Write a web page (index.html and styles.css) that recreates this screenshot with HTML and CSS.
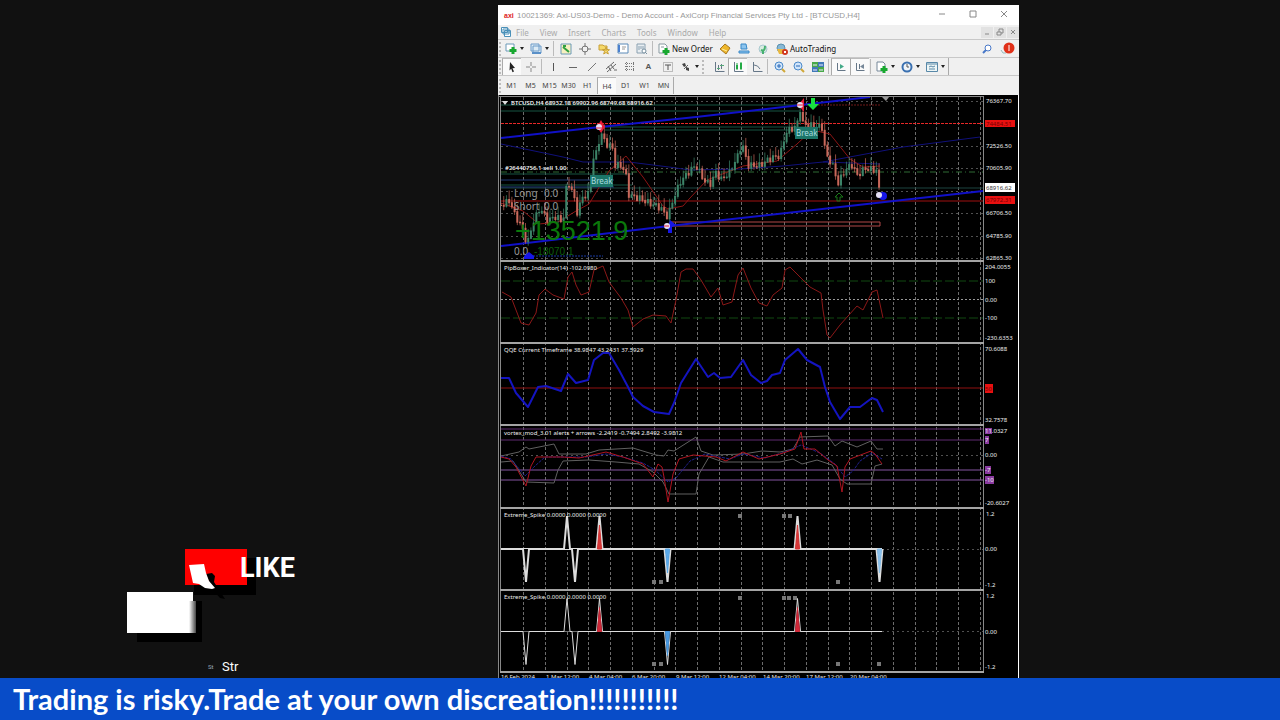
FILE: index.html
```
<!DOCTYPE html>
<html lang="en">

<head>
    <meta charset="UTF-8">
    <meta name="viewport" content="width=device-width, initial-scale=1.0">
    <title>Live Trading Stream</title>
    <link rel="stylesheet" href="styles.css">
</head>

<body>
    <main class="stage">
        <aside class="promo">
            <svg class="promo-art" viewBox="120 540 190 138" width="190" height="138">
                <defs>
                    <linearGradient id="edge">
                        <stop offset="0" stop-color="#fff" />
                        <stop offset="1" stop-color="#444" />
                    </linearGradient>
                </defs>
                <path fill="#000" d="M194 558h62v37h-62zM137 601h65v41h-65z" />
                <path fill="#f00" d="M185 549h62v36h-62z" />
                <path fill="#000" d="M206 574l6-1 3 3-1 6 11 17-5-1-8-9z" />
                <path fill="#fff" d="M189 565l15-1 2 9 3 8 6 7-3 1-7-1-6-4-6-1z" />
                <path fill="#fff" d="M127 592h66v41h-66z" />
                <path fill="url(#edge)" d="M189 601h7v32h-7z" />
                <text class="like" x="240" y="577">LIKE</text>
                <text class="mini" x="208" y="669">St</text>
                <text class="str" x="222" y="671">Str</text>
            </svg>
        </aside>

        <section class="terminal">
            <header class="title-bar">
                <span class="brand">axi</span>
                <h1>10021369: Axi-US03-Demo - Demo Account - AxiCorp Financial Services Pty Ltd - [BTCUSD,H4]</h1>
                <div class="window-buttons">
                    <button aria-label="Minimize"><svg viewBox="0 0 8 8"><path d="M1 4h6" /></svg></button>
                    <button aria-label="Maximize"><svg viewBox="0 0 8 8"><path d="M1 1h6v6h-6z" /></svg></button>
                    <button aria-label="Close"><svg viewBox="0 0 8 8"><path d="M1 1l6 6M7 1l-6 6" /></svg></button>
                </div>
            </header>

            <nav class="menu-bar">
                <svg class="menu-logo" viewBox="0 0 10 10"><path fill="#fff" stroke="#4a90b8" d="M.5.5h6v5h-6zM2 2h6v5h-6zM3.500 3.500h6v6h-6zM4 5h5" /></svg>
                <button>File</button>
                <button>View</button>
                <button>Insert</button>
                <button>Charts</button>
                <button>Tools</button>
                <button>Window</button>
                <button>Help</button>
                <div class="child-buttons">
                    <button aria-label="Minimize chart"><svg viewBox="0 0 8 8"><path d="M2 6h4" /></svg></button>
                    <button aria-label="Restore chart"><svg viewBox="0 0 8 8"><path d="M1 4h4v3h-4zM3 4v-3h4v4h-2" /></svg></button>
                    <button aria-label="Close chart"><svg viewBox="0 0 8 8"><path d="M2 2l4 4M6 2l-4 4" /></svg></button>
                </div>
            </nav>

            <div class="toolbar">
                <i class="handle"></i>
                <button class="tool drop" aria-label="New chart"><svg viewBox="0 0 12 12"><path fill="#fff" stroke="#6a9ab8" d="M1 1h8v7h-8z" /><path stroke="#18a830" stroke-width="3" d="M8 4v7M4.500 7.500h7" /></svg></button>
                <button class="tool drop" aria-label="Profiles"><svg viewBox="0 0 12 12"><path fill="#dcebf5" stroke="#6a9ac8" d="M3 3h8v7h-8zM1 1h8v7h-8z" /><path stroke="#5a90c8" stroke-width="2" d="M2 10h9" /></svg></button>
                <i class="sep"></i>
                <button class="tool" aria-label="Market watch"><svg viewBox="0 0 12 12"><path fill="#f7f0c0" stroke="#6a9ab8" d="M1 1h10v10h-10z" /><path stroke="#30a040" stroke-width="2" d="M3 4l6 5M3 3h3" /></svg></button>
                <button class="tool" aria-label="Data window"><svg viewBox="0 0 12 12"><circle cx="6" cy="6" r="3" stroke="#777" fill="none" /><path stroke="#777" d="M6 0v4M6 8v4M0 6h4M8 6h4" /></svg></button>
                <button class="tool" aria-label="Navigator"><svg viewBox="0 0 12 12"><path fill="#f5d96a" stroke="#c8a038" d="M1 2h4l1 1h3v4h-8zM8 4l1 2.500 2.500.3-2 1.500.8 2.700-2.300-1.500-2.300 1.500.8-2.700-2-1.500 2.500-.3z" /></svg></button>
                <button class="tool" aria-label="Terminal"><svg viewBox="0 0 12 12"><path fill="#fff" stroke="#5a8ab8" d="M1 1h10v9h-10z" /><path stroke="#4a80d0" stroke-width="2" d="M2 2v7" /><path stroke="#999" d="M5 4h4M5 6h3" /></svg></button>
                <button class="tool" aria-label="Strategy tester"><svg viewBox="0 0 12 12"><path fill="#e8eef2" stroke="#8aa0b0" d="M1 1h8v9h-8zM3 3v4M5 3v3M7 3v4" /><circle cx="8" cy="8" r="2" stroke="#7890a0" fill="#fff" /><path stroke="#7890a0" d="M9 9l2 2" /></svg></button>
                <i class="sep"></i>
                <button class="tool labelled"><svg viewBox="0 0 12 12"><path fill="#fff" stroke="#8899a0" d="M1 1h6l2 2v7h-8zM3 4h3" /><path stroke="#18a830" stroke-width="3" d="M8 5v7M4.500 8.500h7" /></svg>New Order</button>
                <button class="tool" aria-label="MetaEditor"><svg viewBox="0 0 12 12"><path fill="#eeb72c" stroke="#a87820" d="M1 6l5-5 5 4-4 6z" /><path stroke="#fff0a0" d="M3 6l5 2" /></svg></button>
                <button class="tool" aria-label="Community"><svg viewBox="0 0 12 12"><path fill="#8cc4ee" stroke="#3888c8" d="M3 1h5l1 5h-6zM1 8h10v2h-10z" /></svg></button>
                <button class="tool" aria-label="Signals"><svg viewBox="0 0 12 12"><circle cx="6" cy="6" r="4" fill="#d8ece0" stroke="#a8c8d0" /><path stroke="#48b070" stroke-width="2" fill="none" d="M4 7q4 2 4-4M6 7v4" /></svg></button>
                <button class="tool labelled"><svg viewBox="0 0 12 12"><circle cx="5" cy="5" r="4" fill="#88b8d4" stroke="#5890b0" /><path fill="#e8b840" d="M1 6h9l-3 5h-4z" /><circle cx="9" cy="9" r="3" fill="#d03820" /><path fill="#fff" d="M8 8h2v2h-2z" /></svg>AutoTrading</button>
                <div class="toolbar-end">
                    <button class="tool" aria-label="Search"><svg viewBox="0 0 12 12"><circle cx="7" cy="5" r="3" fill="#fff" stroke="#4878c8" /><path stroke="#4878c8" stroke-width="2" d="M5 7l-3 3" /></svg></button>
                    <button class="tool alerts" aria-label="1 notification"><svg viewBox="0 0 15 13"><path stroke="#9bb" fill="none" d="M1 8l2 3h3" /><circle cx="9" cy="6" r="5.500" fill="#e03018" /><path stroke="#fff" d="M9 3v6" /></svg></button>
                </div>
            </div>

            <div class="toolbar">
                <i class="handle"></i>
                <button class="tool on" aria-label="Cursor"><svg viewBox="0 0 12 12"><path fill="#222" d="M4 1l5 6-2.500.2 1.500 3.300-1.500.7-1.300-3.400-1.700 1.600z" /></svg></button>
                <button class="tool" aria-label="Crosshair"><svg viewBox="0 0 12 12"><path stroke="#888" d="M6 1v4M6 7v4M1 6h4M7 6h4" /></svg></button>
                <i class="sep"></i>
                <button class="tool" aria-label="Vertical line"><svg viewBox="0 0 12 12"><path stroke="#555" d="M5.500 2v8" /></svg></button>
                <button class="tool" aria-label="Horizontal line"><svg viewBox="0 0 12 12"><path stroke="#666" d="M2 6.500h8" /></svg></button>
                <button class="tool" aria-label="Trendline"><svg viewBox="0 0 12 12"><path stroke="#777" d="M2 10l8-8" /></svg></button>
                <button class="tool" aria-label="Channel"><svg viewBox="0 0 12 12"><path stroke="#666" fill="none" d="M1 8l8-7M2 11l9-8M3 5l3 5M6 4l3 4M9 9h3" /></svg></button>
                <button class="tool" aria-label="Fibonacci"><svg viewBox="0 0 12 12"><path stroke="#777" stroke-dasharray="1 1" d="M1 2.500h10M1 5.500h10M1 8.500h10M2.500 1v10M9.500 1v10" /></svg></button>
                <button class="tool letter">A</button>
                <button class="tool" aria-label="Text label"><svg viewBox="0 0 12 12"><path stroke="#888" stroke-dasharray="1 1" fill="none" d="M1.500 1.500h9v9h-9z" /><path stroke="#555" d="M3 4h6M6 4v5" /></svg></button>
                <button class="tool drop" aria-label="Arrows"><svg viewBox="0 0 12 12"><path fill="#444" d="M2 3l3-1 1 3-2 1zM6 6l3 1v3l-3-1z" /><path stroke="#666" d="M4 8l4-4" /></svg></button>
                <i class="handle wide"></i>
                <button class="tool" aria-label="Bar chart"><svg viewBox="0 0 12 12"><path stroke="#678" fill="none" d="M2.500 1v9.500h9M5.500 4v5M8.500 3v5" /><path stroke="#5a7" d="M4 7.500h3M7 4.500h4" /></svg></button>
                <button class="tool on" aria-label="Candlesticks"><svg viewBox="0 0 12 12"><path stroke="#678" fill="none" d="M2.500 1v9.500h9" /><path fill="#2a4" d="M4 4h2v4h-2zM8 2h2v6h-2z" /><path stroke="#2a4" d="M5 2v7M9 1v8" /></svg></button>
                <button class="tool" aria-label="Line chart"><svg viewBox="0 0 12 12"><path stroke="#678" fill="none" d="M2.500 1v9.500h9M3 4q4 0 6 4" /></svg></button>
                <i class="sep"></i>
                <button class="tool" aria-label="Zoom in"><svg viewBox="0 0 12 12"><circle cx="5" cy="5" r="4" fill="#cfe4fa" stroke="#4a88c8" /><path stroke="#2868b8" d="M3 5h4M5 3v4" /><path stroke="#d0a838" stroke-width="2" d="M8 8l3 3" /></svg></button>
                <button class="tool" aria-label="Zoom out"><svg viewBox="0 0 12 12"><circle cx="5" cy="5" r="4" fill="#cfe4fa" stroke="#4a88c8" /><path stroke="#2868b8" d="M3 5h4" /><path stroke="#d0a838" stroke-width="2" d="M8 8l3 3" /></svg></button>
                <button class="tool" aria-label="Tile windows"><svg viewBox="0 0 12 12"><path fill="#48a848" d="M0 1h6v5h-6zM6 6h6v5h-6z" /><path fill="#4078b8" d="M6 1h6v5h-6zM0 6h6v5h-6z" /><path stroke="#eef" d="M1 4h4M7 4h4M1 9h4M7 9h4" /></svg></button>
                <i class="sep"></i>
                <button class="tool on" aria-label="Auto scroll"><svg viewBox="0 0 12 12"><path stroke="#678" fill="none" d="M2.500 2v7.500h8" /><path fill="#4a8" d="M5 3l4 2.500-4 2.500z" /></svg></button>
                <button class="tool on" aria-label="Chart shift"><svg viewBox="0 0 12 12"><path stroke="#678" fill="none" d="M2.500 2v7.500h8M5.500 3v5" /><path fill="#789" d="M10 3l-4 2.500 4 2.500z" /></svg></button>
                <i class="sep"></i>
                <button class="tool drop" aria-label="Indicators"><svg viewBox="0 0 12 12"><path fill="#fff" stroke="#789" d="M1 1h6l2 2v7h-8z" /><path stroke="#18a830" stroke-width="3" d="M8 5v7M4.500 8.500h7" /></svg></button>
                <button class="tool drop" aria-label="Periods"><svg viewBox="0 0 12 12"><circle cx="6" cy="6" r="4.500" fill="#eef4fa" stroke="#3a70b0" stroke-width="2" /><path stroke="#555" fill="none" d="M6 3v3h2" /></svg></button>
                <button class="tool drop" aria-label="Templates"><svg viewBox="0 0 12 12"><path fill="#eef6f6" stroke="#5888a8" d="M.5 1.500h11v9h-11zM1 3h10M3 6l2-1 2 1 2-1M3 8h6" /></svg></button>
                <i class="bar-end"></i>
            </div>

            <div class="toolbar timeframes">
                <i class="handle"></i>
                <button class="tool">M1</button>
                <button class="tool">M5</button>
                <button class="tool">M15</button>
                <button class="tool">M30</button>
                <button class="tool">H1</button>
                <button class="tool on">H4</button>
                <button class="tool">D1</button>
                <button class="tool">W1</button>
                <button class="tool">MN</button>
                <i class="bar-end"></i>
            </div>

            <svg class="chart" id="chart" viewBox="498 95 521 590">
                <rect x="498" y="95" width="521" height="590" fill="#000" />

                <!-- grid -->
                <g class="grid" id="grid"></g>
                <path class="grid" d="M501 101H983M501 146H983M501 168H983M501 191H983M501 213H983M501 236H983M501 258H983M501 455H983M882 549H983M882 631H983" />
                <path class="grid zero" d="M501 299H983" />

                <!-- price window -->
                <g fill="none">
                    <path stroke="#175443" d="M501 105H800M501 111H800M605 127H810M605 130H810M501 174H632M501 185H632" />
                    <path stroke="#1d4540" d="M501 188H983" />
                    <path stroke="#203a78" d="M501 180H614M501 187H614" />
                    <path stroke="#701818" stroke-dasharray="2 1" d="M800 105H880" />
                    <path stroke="#e82828" stroke-dasharray="3 1" d="M501 123.500H983" />
                    <path stroke="#2f6a35" stroke-dasharray="6 3 1 3" d="M501 172H983" />
                    <path stroke="#a01010" d="M501 201H983" />
                    <path stroke="#b04848" d="M670 222H880V226H670z" />
                    <path stroke="#10107a" d="M501 144L563 157L583 162L629 162L669 167L690 170L740 169L783 166L823 162L880 164M823 162L903 147L980 137" />
                    <path stroke="#8c1414" d="M501 203L523 211L539 224L558 222L576 211L589 204L609 171L626 156L643 177L663 206L668 209L683 206L690 198L707 180L743 166L777 161L797 144L812 130L830 134L850 159L863 167L880 166" />
                    <path stroke="#1010c8" stroke-width="2" d="M501 138L600 127L696 117L870 97M501 246L669 226L983 191" />
                    <path stroke="#1838a0" stroke-dasharray="2 1" d="M530 256H603" />
                </g>
                <g id="candles"></g>
                <text class="profit" x="515" y="240">+13521.9</text>
                <text class="loss" x="534" y="255">-18070.1</text>
                <g class="stats">
                    <text x="514" y="197">Long</text>
                    <text x="544" y="197">0.0</text>
                    <text x="514" y="210">Short</text>
                    <text x="544" y="210">0.0</text>
                    <text x="514" y="255">0.0</text>
                </g>
                <path fill="#1b7568" d="M590 175h23v12h-23zM795 127h23v12h-23z" />
                <text class="break" x="591" y="184">Break</text>
                <text class="break" x="796" y="136">Break</text>
                <g fill="#1616e8">
                    <path d="M524 256l5-4 5 4v3h-10zM670 220l6 5-4 2v6h-4v-6z" />
                    <circle cx="883" cy="196" r="4" />
                </g>
                <path fill="#e81c38" d="M597 127l4-7 4 7-4 6zM798 105l6-7v14z" />
                <g fill="#e4e0f4">
                    <circle cx="599" cy="127" r="3" />
                    <circle cx="800" cy="105" r="3" />
                    <circle cx="667" cy="226" r="3" />
                    <circle cx="879" cy="195" r="3" />
                </g>
                <path stroke="#e81c38" d="M596 128h6M797 105h7M664 226h5" />
                <path fill="#18e040" d="M811 98h4v6h4l-6 6-6-6h4z" />
                <path fill="none" stroke="#187818" d="M839 193l4 4h-3v4h-3v-4h-2z" />
                <path fill="#999" d="M882 97h7l-3 4z" />
                <path fill="#ddd" d="M502 101h6l-3 4z" />
                <text class="quote" x="511" y="105">BTCUSD,H4 68932.18 69902.96 68749.68 68916.62</text>
                <text class="quote" x="505" y="170">#26440756.1 sell 1.00</text>

                <!-- PipBoxer -->
                <path class="level" d="M501 281H983M501 318H983" />
                <path class="line red" d="M502 292L511 297L516 310L521 323L529 325L536 313L539 295L545 289L553 295L564 299L568 277L572 272L576 285L581 295L589 292L594 270L603 266L609 282L621 298L628 310L633 327L643 319L653 315L666 316L671 323L676 300L681 272L686 269L693 269L701 280L711 297L718 288L723 305L732 302L738 275L743 268L751 288L759 303L767 306L773 295L782 288L785 270L790 267L800 277L810 287L821 293L823 310L827 335L830 338L840 325L857 306L863 310L872 292L877 290L883 318" />
                <text x="504" y="270">PipBoxer_Indicator(14) -102.0980</text>

                <!-- QQE -->
                <path stroke="#901010" d="M501 388H983" />
                <path class="line blue" d="M501 378L509 378L516 393L528 407L538 387L546 386L561 391L568 374L576 383L588 380L594 360L603 353L609 353L619 370L628 387L633 397L643 406L654 412L669 414L674 403L681 383L696 359L708 377L714 373L720 378L731 377L743 360L751 375L761 383L767 381L772 375L780 373L785 360L798 349L807 360L820 367L825 387L830 402L840 419L850 407L860 407L872 398L877 400L883 412" />
                <text x="504" y="352">QQE Current Timeframe 38.9847 43.2431 37.5929</text>

                <!-- vortex -->
                <path stroke="#5f2a70" d="M501 429H983M501 440H983" />
                <path stroke="#8454a0" d="M501 470H983M501 480H983" />
                <path class="line gray" d="M501 456L519 452L526 447L529 449L554 444L559 454L586 454L599 450L633 448L656 455L664 456L668 450L674 451L696 437L701 451L713 455L743 454L762 451L780 452L793 449L800 437L828 436L835 446L842 441L857 447L871 441L877 449L883 449" />
                <path class="line gray" d="M501 462L513 461L526 482L554 483L558 470L563 461L589 460L616 462L639 464L653 472L663 482L669 494L696 494L699 474L709 457L723 462L763 462L780 462L793 459L802 464L817 460L832 465L840 479L847 484L871 484L875 466L882 464" />
                <path class="line navy" d="M501 456L511 459L525 476L535 466L545 457L586 457L606 454L623 457L643 463L655 470L668 482L676 478L690 461L705 454L730 459L743 454L765 458L785 452L801 445L820 453L835 464L845 477L853 471L860 461L872 453L882 459" />
                <path class="line bright" d="M501 457L509 459L516 467L526 486L531 466L536 457L563 457L579 458L606 452L623 457L643 464L653 477L658 464L662 467L664 477L668 502L673 474L679 459L693 455L716 457L726 461L743 452L759 459L780 454L795 449L801 432L804 449L815 449L828 460L837 466L842 492L845 467L850 459L871 451L875 454L882 464" />
                <text x="504" y="435">vortex_mod_3.01 alerts + arrows -2.2419 -0.7494 2.8492 -3.9812</text>

                <!-- extreme spike -->
                <g id="spikes" fill="none"></g>
                <g fill="#777">
                    <path d="M738 514h4v4h-4zM782 514h4v4h-4zM788 514h4v4h-4zM652 580h4v4h-4zM659 580h4v4h-4zM836 580h4v4h-4z" />
                    <path d="M738 596h4v4h-4zM782 596h4v4h-4zM787 596h4v4h-4zM793 596h4v4h-4zM652 662h4v4h-4zM659 662h4v4h-4zM836 662h4v4h-4zM877 662h4v4h-4z" />
                </g>
                <text x="504" y="517">Extreme_Spike 0.0000 0.0000 0.0000</text>
                <text x="504" y="599">Extreme_Spike 0.0000 0.0000 0.0000</text>

                <!-- frames -->
                <path class="frame" d="M498.500 95V685M500.500 96V672M498 96.500H983M983.500 96V672" />
                <path class="divider" d="M500 261H984M500 343H984M500 425H984M500 508H984M500 590H984M500 672H984" />
                <path stroke="#fff" d="M1018.500 95V685" />

                <!-- axis values -->
                <path fill="#e81010" d="M985 120h30v7h-30zM985 196h30v8h-30zM985 384h8v9h-8z" />
                <path fill="#fff" d="M985 183h30v9h-30z" />
                <path fill="#8a3aa0" d="M985 428h7v6h-7zM985 436h4v8h-4zM985 466h6v8h-6zM985 476h9v8h-9z" />
                <g class="axis">
                    <text x="986" y="103">76367.70</text>
                    <text x="986" y="126" class="on-red">74484.51</text>
                    <text x="986" y="148">72526.50</text>
                    <text x="986" y="170">70605.90</text>
                    <text x="986" y="190" class="on-white">68916.62</text>
                    <text x="986" y="202" class="on-red">67972.31</text>
                    <text x="986" y="215">66706.50</text>
                    <text x="986" y="238">64785.90</text>
                    <text x="986" y="260">62865.30</text>
                    <text x="985" y="269">204.0055</text>
                    <text x="985" y="283">100</text>
                    <text x="985" y="302">0.00</text>
                    <text x="985" y="320">-100</text>
                    <text x="985" y="340">-230.6353</text>
                    <text x="985" y="351">70.6088</text>
                    <text x="985" y="391" class="on-red">50</text>
                    <text x="985" y="422">32.7578</text>
                    <text x="985" y="433">11.0327</text>
                    <text x="985" y="442">7</text>
                    <text x="985" y="457">0.00</text>
                    <text x="985" y="472">-7</text>
                    <text x="985" y="482">-10</text>
                    <text x="985" y="505">-20.6027</text>
                    <text x="986" y="516">1.2</text>
                    <text x="985" y="551">0.00</text>
                    <text x="985" y="587">-1.2</text>
                    <text x="986" y="598">1.2</text>
                    <text x="985" y="634">0.00</text>
                    <text x="985" y="669">-1.2</text>
                    <text x="501" y="679">16 Feb 2024</text>
                    <text x="546" y="679">1 Mar 12:00</text>
                    <text x="589" y="679">4 Mar 04:00</text>
                    <text x="632" y="679">6 Mar 20:00</text>
                    <text x="676" y="679">9 Mar 12:00</text>
                    <text x="719" y="679">12 Mar 04:00</text>
                    <text x="763" y="679">14 Mar 20:00</text>
                    <text x="806" y="679">17 Mar 12:00</text>
                    <text x="850" y="679">20 Mar 04:00</text>
                </g>
            </svg>
        </section>
    </main>

    <footer class="ticker">
        <p>Trading is risky.Trade at your own discreation!!!!!!!!!!!</p>
    </footer>

    <script src="chart.js"></script>
</body>

</html>
```
FILE: styles.css
```
* {
    margin: 0;
    padding: 0;
    box-sizing: border-box;
}

body {
    font-family: 'Liberation Sans', sans-serif;
    background-color: #111;
    height: 100vh;
    display: flex;
    flex-direction: column;
    overflow: hidden;
}

button {
    border: none;
    background: none;
    font: inherit;
    color: inherit;
    cursor: pointer;
}

.stage {
    flex: 1;
    min-height: 0;
    display: grid;
    grid-template-columns: 498fr 521fr 261fr;
    overflow: hidden;
}

/* Promo */
.promo {
    display: flex;
    align-items: flex-end;
    padding-left: 24%;
}

.promo-art {
    display: block;
}

.like {
    font: bold 27px 'Roboto', sans-serif;
    fill: #fff;
}

.mini {
    font: 6px 'Roboto', sans-serif;
    fill: #9ab;
}

.str {
    font: 13px 'Roboto', sans-serif;
    fill: #fff;
}

/* Terminal window */
.terminal {
    padding-top: 5px;
    min-width: 0;
    min-height: 0;
    color: #333;
    font-size: 8px;
}

.title-bar {
    height: 20px;
    display: flex;
    align-items: center;
    background-color: #fff;
    padding-left: 6px;
}

.brand {
    width: 13px;
    color: #d22;
    font-size: 7px;
    font-weight: bold;
}

.title-bar h1 {
    font-size: 8px;
    font-weight: normal;
    color: #999;
    white-space: nowrap;
}

.window-buttons {
    display: flex;
    margin-left: auto;
}

.window-buttons button {
    width: 31px;
    height: 20px;
}

.window-buttons svg,
.child-buttons svg {
    width: 8px;
    height: 8px;
    fill: none;
    stroke: #888;
}

.menu-bar {
    height: 14px;
    display: flex;
    align-items: center;
    gap: 11px;
    padding-left: 3px;
    background-color: #f0f0f0;
    font-family: 'Noto Sans', sans-serif;
    color: #aaa;
}

.menu-logo {
    width: 10px;
    height: 10px;
    margin-right: -6px;
}

.child-buttons {
    display: flex;
    gap: 1px;
    margin-left: auto;
}

.child-buttons button {
    width: 12px;
    height: 11px;
    background-color: #e2e2e2;
}

.toolbar {
    height: 18px;
    display: flex;
    align-items: center;
    background-color: #f0f0f0;
    border-top: 1px solid #c8c8c8;
    padding-left: 1px;
}

.handle {
    width: 3px;
    height: 14px;
    border-left: 2px dotted #bbb;
}

.handle.wide {
    width: 7px;
}

.sep {
    width: 1px;
    height: 15px;
    margin: 0 2px 0 1px;
    background-color: #bbb;
}

.bar-end {
    width: 1px;
    height: 17px;
    background-color: #aaa;
}

.tool {
    width: 19px;
    height: 17px;
    display: flex;
    align-items: center;
    justify-content: center;
    flex-shrink: 0;
}

.tool svg {
    width: 12px;
    height: 12px;
    flex-shrink: 0;
}

.tool.on {
    background-color: #fafafa;
    border-left: 1px solid #aaa;
    border-top: 1px solid #bbb;
}

.tool.drop {
    width: 25px;
    padding-left: 3px;
    justify-content: flex-start;
    gap: 3px;
}

.tool.drop::after {
    content: '';
    border: 2px solid transparent;
    border-top: 3px solid #222;
    border-bottom: none;
}

.tool.labelled {
    width: auto;
    padding: 0 3px;
    gap: 2px;
    font-family: 'Noto Sans', sans-serif;
    color: #111;
}

.tool.letter {
    font-weight: bold;
    color: #555;
}

.toolbar-end {
    display: flex;
    margin-left: auto;
}

.tool.alerts {
    width: 23px;
}

.tool.alerts svg {
    width: 15px;
    height: 13px;
}

.timeframes {
    height: 20px;
    font-family: 'Noto Sans', sans-serif;
    font-size: 7px;
    color: #444;
}

/* Chart */
.chart {
    display: block;
    width: 100%;
    height: auto;
}

.chart text {
    font-family: 'Noto Sans', sans-serif;
    font-size: 6px;
    fill: #eee;
}

.chart .quote {
    font-weight: 600;
}

.chart .on-red {
    fill: #700;
}

.chart .on-white {
    fill: #333;
}

.chart .stats text {
    font-size: 10px;
    fill: #999;
}

.chart .profit {
    font-family: 'Liberation Sans', sans-serif;
    font-size: 27px;
    fill: #0b780b;
}

.chart .loss {
    font-family: 'Liberation Sans', sans-serif;
    font-size: 10px;
    fill: #0b5f0b;
}

.chart .break {
    font-size: 8px;
    fill: #a8dce0;
}

.grid {
    stroke: #6c6c6c;
    stroke-dasharray: 3 2;
    shape-rendering: crispEdges;
}

path.grid {
    stroke: #505050;
    stroke-dasharray: 2 3;
}

path.grid.zero {
    stroke: #999;
    stroke-dasharray: 2 2;
}

.level {
    stroke: #104810;
    stroke-dasharray: 9 3;
}

.line {
    fill: none;
    stroke-linejoin: round;
}

.line.red {
    stroke: #8c1818;
}

.line.blue {
    stroke: #1414c0;
    stroke-width: 2;
}

.line.gray {
    stroke: #606060;
}

.line.navy {
    stroke: #20208c;
    stroke-dasharray: 3 1;
}

.line.bright {
    stroke: #b01420;
}

.frame {
    stroke: #888;
    fill: none;
}

.divider {
    stroke: #a4a4a4;
    stroke-width: 2;
}

/* Ticker */
.ticker {
    height: 42px;
    display: flex;
    align-items: center;
    padding-left: 13px;
    background-color: #084cc8;
}

.ticker p {
    font-family: 'Lato', sans-serif;
    font-size: 29px;
    font-weight: bold;
    font-variant-ligatures: none;
    line-height: 40px;
    color: #fff;
    white-space: nowrap;
}
```
FILE: chart.js
```
const SVG_NS = 'http://www.w3.org/2000/svg';

function addPath(parent, attrs) {
    const path = document.createElementNS(SVG_NS, 'path');
    for (const key in attrs) {
        path.setAttribute(key, attrs[key]);
    }
    document.getElementById(parent).appendChild(path);
}

// vertical grid, one line every 8 bars
for (let i = 0; i < 21; i++) {
    const x = Math.round(523 + i * 21.75);
    addPath('grid', { d: `M${x} 97V672` });
}
addPath('grid', { d: 'M980 97V672' });

// swing points of the price
const swings = [
    [501, 205], [510, 200], [515, 215], [521, 225], [524, 232], [527, 245], [533, 222],
    [540, 208], [548, 220], [556, 216], [563, 222], [566, 190], [568, 182], [573, 192],
    [577, 212], [583, 196], [590, 193], [592, 160], [598, 150], [600, 131], [606, 143],
    [613, 148], [614, 165], [622, 165], [626, 175], [629, 195], [640, 198], [650, 203],
    [660, 207], [668, 217], [671, 205], [680, 182], [690, 170], [696, 165], [704, 180],
    [710, 184], [717, 170], [720, 180], [730, 172], [738, 155], [742, 143], [748, 165],
    [760, 165], [770, 158], [780, 155], [786, 132], [797, 125], [800, 108], [803, 123],
    [810, 125], [822, 127], [826, 155], [832, 163], [838, 183], [845, 170], [852, 164],
    [857, 175], [865, 168], [877, 170], [879, 188]
];

function priceAt(x) {
    let i = 1;
    while (i < swings.length - 1 && swings[i][0] < x) i++;
    const [x1, y1] = swings[i - 1];
    const [x2, y2] = swings[i];
    return y1 + (y2 - y1) * (x - x1) / (x2 - x1);
}

let open = 205;
for (let i = 0; i < 140; i++) {
    const x = 501 + i * 2.72;
    const close = priceAt(x) + Math.sin(i * 2.3) * 3;
    const top = Math.min(open, close);
    const bottom = Math.max(open, close);
    const color = close < open ? '#3c8468' : '#c8685a';
    const wick = 2 + Math.abs(Math.sin(i * 1.7)) * 7;
    addPath('candles', { stroke: color, 'stroke-width': 1, opacity: 0.7, d: `M${x} ${top - wick}V${bottom + wick / 2}` });
    addPath('candles', { stroke: color, 'stroke-width': 2, d: `M${x} ${top}V${bottom + 1}` });
    open = close;
}

// spikes: x, direction, fill colour
function drawSpikes(zero, width, spikes) {
    addPath('spikes', { stroke: '#ddd', 'stroke-width': width, d: `M501 ${zero}H882` });
    spikes.forEach(([x, dir, fill]) => {
        const tip = zero - 33 * dir;
        addPath('spikes', { stroke: '#ddd', 'stroke-width': width, fill: '#000', d: `M${x - 3} ${zero}L${x} ${tip}L${x + 3} ${zero}` });
        if (fill) {
            addPath('spikes', { stroke: fill, fill: fill, d: `M${x - 2} ${zero}L${x} ${zero - 24 * dir}L${x + 2} ${zero}z` });
        }
    });
}

drawSpikes(549, 2, [[526, -1], [567, 1], [575, -1], [599.5, 1, '#d83838'], [667.5, -1, '#5aa8e8'], [797.5, 1, '#d83838'], [879.5, -1, '#88c0ec']]);
drawSpikes(631.5, 1, [[526, -1], [567, 1], [575, -1], [599.5, 1, '#d02838'], [667.5, -1, '#4898e0'], [797.5, 1, '#d02838']]);
```
